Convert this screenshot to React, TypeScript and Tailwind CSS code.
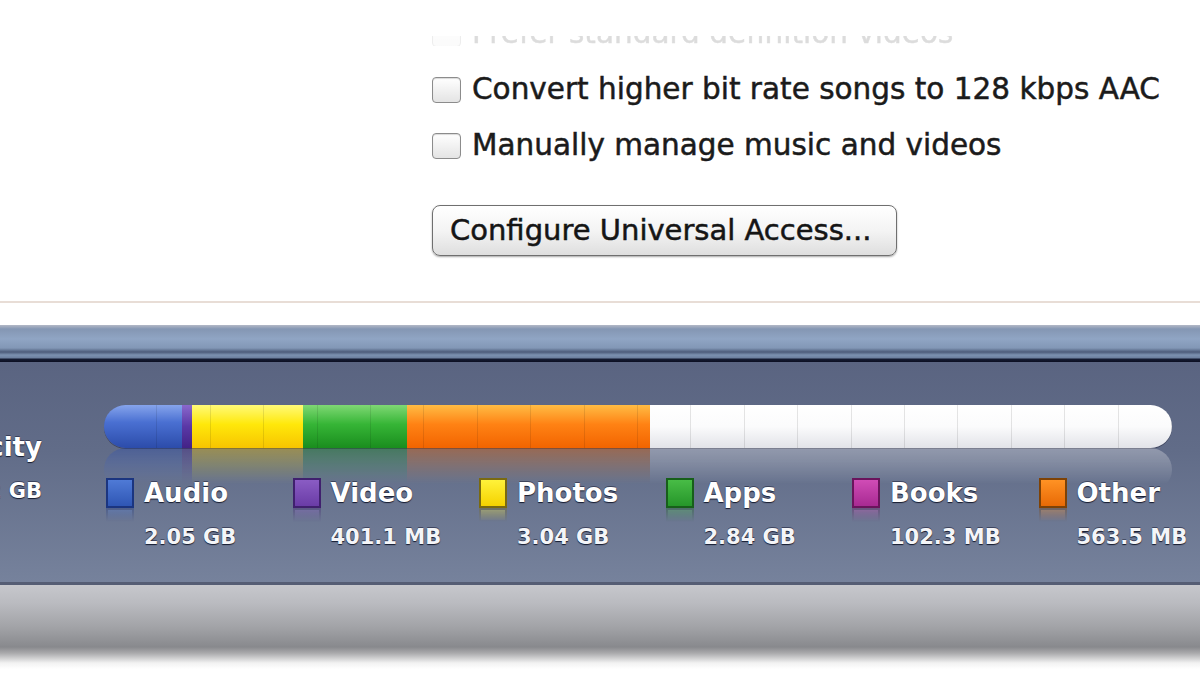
import React from 'react';

type Segment = { key: string; width: number; fill: string };
type LegendItem = { label: string; value: string; fill: string };

const segments: Segment[] = [
  { key: 'audio', width: 78, fill: 'bg-[linear-gradient(to_bottom,#86a4ec_0%,#4a70d2_40%,#2c4caa_100%)]' },
  { key: 'video', width: 10, fill: 'bg-[linear-gradient(to_bottom,#8a68cc_0%,#5a38a6_50%,#432286_100%)]' },
  { key: 'photos', width: 111, fill: 'bg-[linear-gradient(to_bottom,#fffa78_0%,#ffe80a_45%,#f7c400_100%)]' },
  { key: 'apps', width: 104, fill: 'bg-[linear-gradient(to_bottom,#7fd874_0%,#36b536_45%,#1a8d1e_100%)]' },
  { key: 'other', width: 243, fill: 'bg-[linear-gradient(to_bottom,#ffbc44_0%,#ff8214_45%,#f26400_100%)]' },
  { key: 'free', width: 522, fill: 'bg-[linear-gradient(to_bottom,#ffffff_0%,#fbfbfc_50%,#e2e3e8_100%)]' },
];

const legend: LegendItem[] = [
  { label: 'Audio', value: '2.05 GB', fill: 'bg-[linear-gradient(to_bottom,#4f7ad6,#2f56b4)] border-[#1b3580]' },
  { label: 'Video', value: '401.1 MB', fill: 'bg-[linear-gradient(to_bottom,#8a5cc4,#6a3ca6)] border-[#40206e]' },
  { label: 'Photos', value: '3.04 GB', fill: 'bg-[linear-gradient(to_bottom,#fff23a,#f5d200)] border-[#7a6a10]' },
  { label: 'Apps', value: '2.84 GB', fill: 'bg-[linear-gradient(to_bottom,#48bc46,#26962a)] border-[#175f1a]' },
  { label: 'Books', value: '102.3 MB', fill: 'bg-[linear-gradient(to_bottom,#d04cb6,#a82a92)] border-[#6a145c]' },
  { label: 'Other', value: '563.5 MB', fill: 'bg-[linear-gradient(to_bottom,#ff9224,#e86a06)] border-[#7e4206]' },
];

const labelShadow = '[text-shadow:0_1px_1px_rgba(15,20,40,0.95),0_-1px_0_rgba(30,35,60,0.6)]';

const Checkbox = () => (
  <div className="h-[26px] w-[29px] shrink-0 rounded-[4px] border border-[#8c8c8c] bg-[linear-gradient(to_bottom,#ffffff,#e4e4e4)] shadow-[inset_0_1px_1px_rgba(0,0,0,0.15)]" />
);

const OptionRow = ({ text }: { text: string }) => (
  <div className="flex h-[30px] items-center gap-[11px]">
    <Checkbox />
    <span className="whitespace-nowrap text-[29.5px] leading-none text-[#1b1b1b] [-webkit-text-stroke:0.5px_#1b1b1b]">{text}</span>
  </div>
);

const BarSegments = () => (
  <div className="flex h-[43px] w-full overflow-hidden rounded-full">
    {segments.map(s => (
      <div key={s.key} className={`h-full ${s.fill}`} style={{ width: s.width }} />
    ))}
  </div>
);

export default function App() {
  return (
    <div className="h-[675px] w-[1200px] overflow-hidden bg-white font-['DejaVu_Sans',sans-serif]">
      {/* Sync options */}
      <div className="h-[301px] pl-[432px] pt-[36px]">
        {/* row scrolled mostly out of view */}
        <div className="h-[10px] overflow-hidden opacity-15">
          <div className="-mt-[17px] blur-[0.6px]">
            <OptionRow text="Prefer standard definition videos" />
          </div>
        </div>
        <div className="mt-[29px] flex flex-col gap-[26px]">
          <OptionRow text="Convert higher bit rate songs to 128 kbps AAC" />
          <OptionRow text="Manually manage music and videos" />
        </div>
        <button className="mt-[44px] flex h-[51px] w-[465px] items-center rounded-[8px] border border-[#6f6f6f] bg-[linear-gradient(to_bottom,#ffffff_0%,#f4f4f4_50%,#dedede_100%)] pl-[17px] text-[29px] leading-none text-[#151515] shadow-[0_1px_2px_rgba(0,0,0,0.35)] [-webkit-text-stroke:0.5px_#151515]">
          Configure Universal Access...
        </button>
      </div>

      <div className="h-[2px] bg-[#e8ddd6]" />
      <div className="h-[22px] bg-white" />

      {/* Header strip */}
      <div className="h-[37px] bg-[linear-gradient(to_bottom,#b3b8c6_0px,#8496b3_4px,#90a5c4_14px,#8297b6_23px,#4d5c7a_27px,#7c91b0_30px,#6c7f9e_33px,#161c33_34px,#0b0f22_37px)]" />

      {/* Capacity panel */}
      <div className="flex h-[220px] bg-[linear-gradient(to_bottom,#5a6481_0%,#616c88_40%,#76829c_100%)]">
        <div className="flex w-[42px] shrink-0 flex-col items-end overflow-hidden pt-[70px] font-bold text-white">
          <span className={`whitespace-nowrap text-[26px] leading-[30px] ${labelShadow}`}>Capacity</span>
          <span className={`mt-[16px] whitespace-nowrap text-[21px] leading-[26px] ${labelShadow}`}>14.02 GB</span>
        </div>

        <div className="ml-[62px] w-[1068px] shrink-0 pt-[43px]">
          <div className="relative">
            <div className="relative rounded-full shadow-[0_1px_0_rgba(20,20,40,0.45)]">
              <BarSegments />
              <div className="pointer-events-none absolute inset-0 rounded-full bg-[repeating-linear-gradient(90deg,transparent_0px,transparent_52.4px,rgba(0,0,0,0.1)_52.4px,rgba(0,0,0,0.1)_53.4px)]" />
            </div>
            {/* reflection */}
            <div className="pointer-events-none absolute left-0 top-full h-[36px] w-full overflow-hidden opacity-40 [mask-image:linear-gradient(to_bottom,rgba(0,0,0,0.95),rgba(0,0,0,0.35)_60%,transparent)]">
              <div className="-scale-y-100">
                <BarSegments />
              </div>
            </div>
          </div>

          <div className="-ml-[62px] mt-[30px] grid w-[1200px] grid-cols-[repeat(6,186.5px)] pl-[64px]">
            {legend.map(item => (
              <div key={item.label} className="flex gap-[10px]">
                <div className="relative h-[30px] w-[28px] shrink-0">
                  <div className={`h-full w-full border-2 ${item.fill}`} />
                  <div className={`absolute left-0 top-full h-[14px] w-full border-2 opacity-35 [mask-image:linear-gradient(to_bottom,black,transparent)] ${item.fill}`} />
                </div>
                <div className="flex flex-col font-bold text-white">
                  <span className={`whitespace-nowrap text-[26px] leading-[30px] ${labelShadow}`}>{item.label}</span>
                  <span className={`mt-[16px] whitespace-nowrap text-[21px] leading-[26px] text-[#f4f5f8] ${labelShadow}`}>{item.value}</span>
                </div>
              </div>
            ))}
          </div>
        </div>
      </div>

      {/* Bottom bar */}
      <div className="h-[3px] bg-[#555d74]" />
      <div className="h-[92px] bg-[linear-gradient(to_bottom,#c6c7cc_0px,#babbc0_18px,#a2a3a7_42px,#88898d_62px,#a9a9ab_68px,#f2f2f2_78px,#ffffff_84px)]" />
    </div>
  );
}
